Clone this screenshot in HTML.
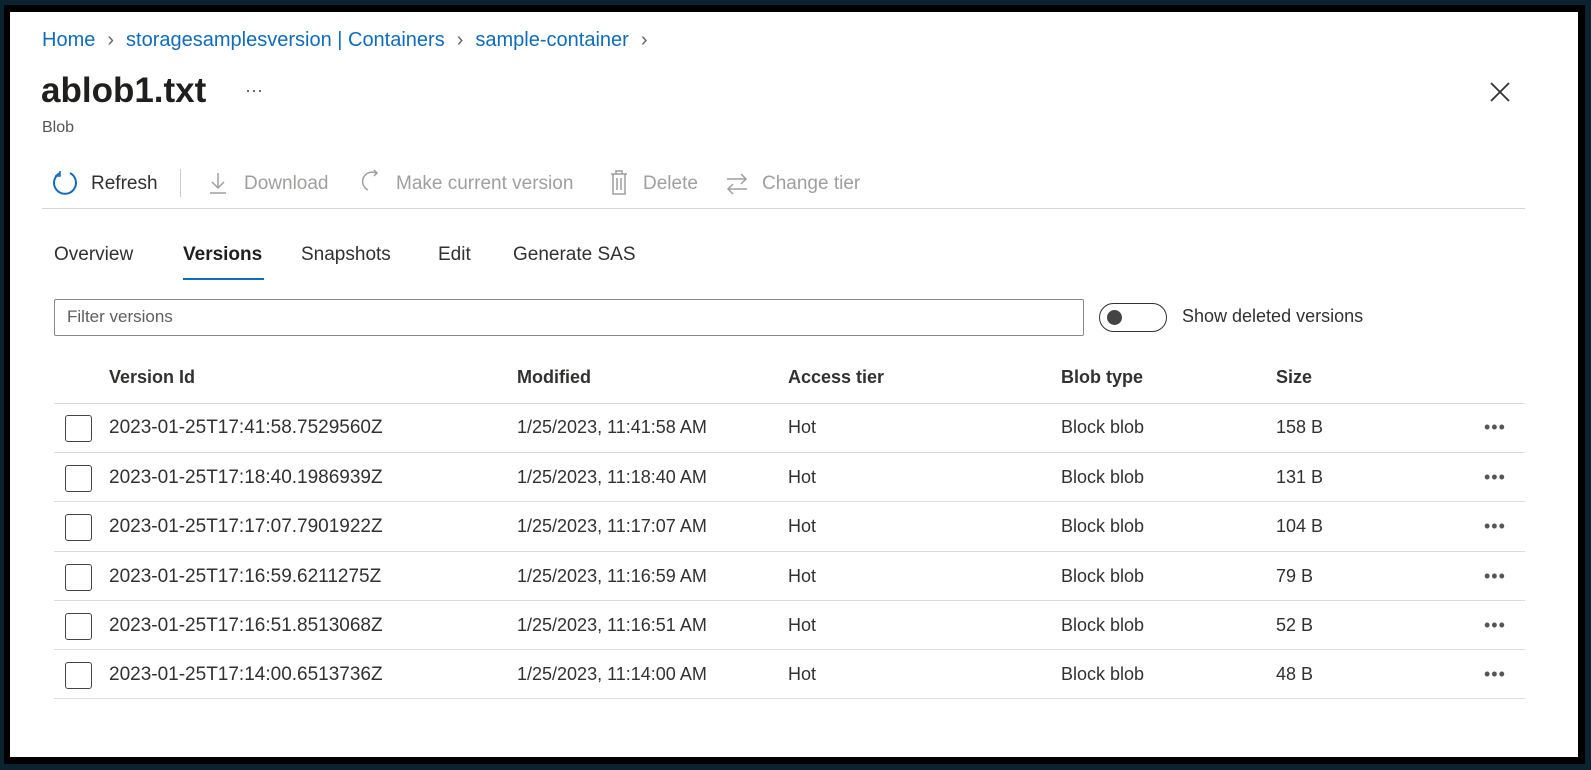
<!DOCTYPE html>
<html><head><style>
*{margin:0;padding:0;box-sizing:border-box}
body{width:1591px;height:770px;background:#0b2231;position:relative;overflow:hidden;font-family:"Segoe UI","Liberation Sans",sans-serif;color:#323130}
.frame{position:absolute;left:4px;top:5px;width:1581px;height:759px;background:#000}
.page{position:absolute;left:10px;top:12px;width:1568px;height:745px;background:#fff}
.a{position:absolute;white-space:nowrap}
.bc{top:29px;font-size:20px;color:#0f6cbd}
.bc .s{color:#666;margin:0 12px}
.tb{top:173px;font-size:19px;color:#a19f9d}
.tab{top:244px;font-size:19px;color:#323130}
.h{top:367px;font-size:18px;font-weight:bold;color:#323130}
.c{font-size:18px;color:#323130}
.v{font-size:19px}
.line{position:absolute;left:54px;width:1471px;height:1px;background:#dcdcdc}
.cb{position:absolute;left:65px;width:27px;height:27px;border:1.5px solid #444;border-radius:3px}
.dots{position:absolute;left:1484px;font-size:18px;color:#555;letter-spacing:1px}
</style></head><body>
<div class="frame"></div>
<div class="page"></div>
<div class="a bc" style="left:42px">Home<span class="s">›</span>storagesamplesversion | Containers<span class="s">›</span>sample-container<span class="s">›</span></div>
<div class="a" style="left:41px;top:71px;font-size:35px;font-weight:600;color:#201f1e">ablob1.txt</div>
<div class="a" style="left:245px;top:80px;font-size:18px;color:#555">···</div>
<div class="a" style="left:42px;top:119px;font-size:16px;color:#555">Blob</div>
<svg class="a" style="left:1488px;top:80px" width="24" height="24"><path d="M3 3L21 21M21 3L3 21" stroke="#333" stroke-width="1.8"/></svg>
<svg class="a" style="left:52px;top:169px" width="26" height="28"><path d="M8 4A11 11 0 1 0 18 4" fill="none" stroke="#0f6cbd" stroke-width="2"/><path d="M8 2v5H3" fill="none" stroke="#0f6cbd" stroke-width="1.5"/></svg>
<div class="a tb" style="left:91px;color:#323130">Refresh</div>
<div class="a" style="left:180px;top:169px;width:1px;height:28px;background:#ccc"></div>
<svg class="a" style="left:207px;top:170px" width="22" height="26"><path d="M11 3v15M5 12l6 6 6-6M3 23h16" fill="none" stroke="#a19f9d" stroke-width="1.5"/></svg>
<div class="a tb" style="left:244px">Download</div>
<svg class="a" style="left:360px;top:168px" width="24" height="28"><path d="M16 5A9 9 0 0 0 8 22" fill="none" stroke="#a19f9d" stroke-width="1.5"/><path d="M14 2l3 3-3 3" fill="none" stroke="#a19f9d" stroke-width="1.5"/></svg>
<div class="a tb" style="left:396px">Make current version</div>
<svg class="a" style="left:608px;top:169px" width="22" height="28"><path d="M3 5h16M8 5V2h6v3M5 5v20h12V5M9 9v12M13 9v12" fill="none" stroke="#a19f9d" stroke-width="1.5"/></svg>
<div class="a tb" style="left:643px">Delete</div>
<svg class="a" style="left:724px;top:171px" width="26" height="26"><path d="M3 8h19M17 3l5 5-5 5M23 18H4M9 13l-5 5 5 5" fill="none" stroke="#a19f9d" stroke-width="1.5"/></svg>
<div class="a tb" style="left:762px">Change tier</div>
<div class="a" style="left:42px;top:208px;width:1483px;height:1px;background:#d6d6d6"></div>
<div class="a tab" style="left:54px">Overview</div>
<div class="a tab" style="left:183px;font-weight:600;color:#201f1e">Versions</div>
<div class="a" style="left:183px;top:278px;width:81px;height:2px;background:#0f6cbd"></div>
<div class="a tab" style="left:301px">Snapshots</div>
<div class="a tab" style="left:438px">Edit</div>
<div class="a tab" style="left:513px">Generate SAS</div>
<div class="a" style="left:54px;top:299px;width:1030px;height:37px;border:1px solid #8a8886;border-radius:2px"></div>
<div class="a" style="left:67px;top:307px;font-size:17px;color:#605e5c">Filter versions</div>
<div class="a" style="left:1099px;top:303px;width:68px;height:29px;border:1.5px solid #333;border-radius:15px"></div>
<div class="a" style="left:1107px;top:310px;width:15px;height:15px;border-radius:50%;background:#444"></div>
<div class="a" style="left:1182px;top:306px;font-size:18px">Show deleted versions</div>
<div class="a h" style="left:109px">Version Id</div>
<div class="a h" style="left:517px">Modified</div>
<div class="a h" style="left:788px">Access tier</div>
<div class="a h" style="left:1061px">Blob type</div>
<div class="a h" style="left:1276px">Size</div>
<div class="line" style="top:403px"></div>
<div class="cb" style="top:415px"></div><div class="a c v" style="left:109px;top:417px">2023-01-25T17:41:58.7529560Z</div><div class="a c" style="left:517px;top:417px">1/25/2023, 11:41:58 AM</div><div class="a c" style="left:788px;top:417px">Hot</div><div class="a c" style="left:1061px;top:417px">Block blob</div><div class="a c" style="left:1276px;top:417px">158 B</div><div class="dots" style="top:417px">•••</div><div class="line" style="top:452px"></div>
<div class="cb" style="top:465px"></div><div class="a c v" style="left:109px;top:467px">2023-01-25T17:18:40.1986939Z</div><div class="a c" style="left:517px;top:467px">1/25/2023, 11:18:40 AM</div><div class="a c" style="left:788px;top:467px">Hot</div><div class="a c" style="left:1061px;top:467px">Block blob</div><div class="a c" style="left:1276px;top:467px">131 B</div><div class="dots" style="top:467px">•••</div><div class="line" style="top:501px"></div>
<div class="cb" style="top:514px"></div><div class="a c v" style="left:109px;top:516px">2023-01-25T17:17:07.7901922Z</div><div class="a c" style="left:517px;top:516px">1/25/2023, 11:17:07 AM</div><div class="a c" style="left:788px;top:516px">Hot</div><div class="a c" style="left:1061px;top:516px">Block blob</div><div class="a c" style="left:1276px;top:516px">104 B</div><div class="dots" style="top:516px">•••</div><div class="line" style="top:551px"></div>
<div class="cb" style="top:564px"></div><div class="a c v" style="left:109px;top:566px">2023-01-25T17:16:59.6211275Z</div><div class="a c" style="left:517px;top:566px">1/25/2023, 11:16:59 AM</div><div class="a c" style="left:788px;top:566px">Hot</div><div class="a c" style="left:1061px;top:566px">Block blob</div><div class="a c" style="left:1276px;top:566px">79 B</div><div class="dots" style="top:566px">•••</div><div class="line" style="top:600px"></div>
<div class="cb" style="top:613px"></div><div class="a c v" style="left:109px;top:615px">2023-01-25T17:16:51.8513068Z</div><div class="a c" style="left:517px;top:615px">1/25/2023, 11:16:51 AM</div><div class="a c" style="left:788px;top:615px">Hot</div><div class="a c" style="left:1061px;top:615px">Block blob</div><div class="a c" style="left:1276px;top:615px">52 B</div><div class="dots" style="top:615px">•••</div><div class="line" style="top:649px"></div>
<div class="cb" style="top:662px"></div><div class="a c v" style="left:109px;top:664px">2023-01-25T17:14:00.6513736Z</div><div class="a c" style="left:517px;top:664px">1/25/2023, 11:14:00 AM</div><div class="a c" style="left:788px;top:664px">Hot</div><div class="a c" style="left:1061px;top:664px">Block blob</div><div class="a c" style="left:1276px;top:664px">48 B</div><div class="dots" style="top:664px">•••</div><div class="line" style="top:698px"></div>
</body></html>
